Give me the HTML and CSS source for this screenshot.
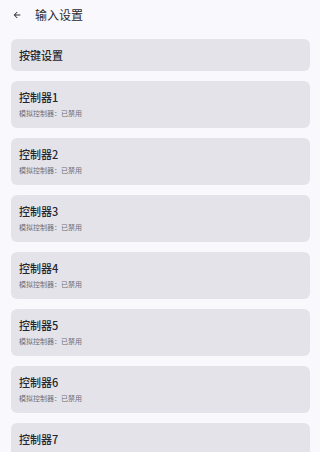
FILE: index.html
```html
<!DOCTYPE html>
<html lang="zh">
<head>
<meta charset="utf-8">
<link rel="stylesheet" href="styles.css">
</head>
<body>
<div class="screen">
  <header class="topbar">
    <svg class="back" viewBox="0 0 24 24" width="10" height="10"><path d="M20 11H7.83l5.59-5.59L12 4l-8 8 8 8 1.41-1.41L7.83 13H20v-2z" fill="#2a2a30"/></svg>
    <span class="title">输入设置</span>
  </header>
  <div class="list">
    <div class="card single"><div class="card-title">按键设置</div></div>
    <div class="card"><div class="card-title">控制器1</div><div class="card-sub">模拟控制器：已禁用</div></div>
    <div class="card"><div class="card-title">控制器2</div><div class="card-sub">模拟控制器：已禁用</div></div>
    <div class="card"><div class="card-title">控制器3</div><div class="card-sub">模拟控制器：已禁用</div></div>
    <div class="card"><div class="card-title">控制器4</div><div class="card-sub">模拟控制器：已禁用</div></div>
    <div class="card"><div class="card-title">控制器5</div><div class="card-sub">模拟控制器：已禁用</div></div>
    <div class="card"><div class="card-title">控制器6</div><div class="card-sub">模拟控制器：已禁用</div></div>
    <div class="card tall"><div class="card-title">控制器7</div></div>
  </div>
</div>
</body>
</html>
```
FILE: styles.css
```css
html, body {
  margin: 0;
  padding: 0;
  background: #ffffff;
}
body {
  font-family: "Noto Sans CJK SC", "Noto Sans", sans-serif;
  color: #2a2a30;
}
.screen {
  height: 452px;
  overflow: hidden;
  background: #f9f8fd;
}
.topbar {
  height: 30px;
  display: flex;
  align-items: center;
  padding-left: 12px;
  box-sizing: border-box;
}
.back {
  margin-right: 13px;
}
.title {
  font-size: 12px;
  line-height: 14px;
  color: #2a2a30;
}
.list {
  display: flex;
  flex-direction: column;
  gap: 10px;
  padding: 9px 10px 0 11px;
}
.card {
  background: #e4e3ea;
  border-radius: 6px;
  padding: 9px 8px 10px;
  flex-shrink: 0;
}
.card.single {
  padding: 9px 8px;
}
.card.tall {
  min-height: 28px;
}
.card-title {
  font-size: 11px;
  line-height: 14px;
  font-weight: 500;
  color: #26262c;
}
.card-sub {
  font-size: 7px;
  line-height: 10px;
  margin-top: 4px;
  color: #6e6d75;
}
```
